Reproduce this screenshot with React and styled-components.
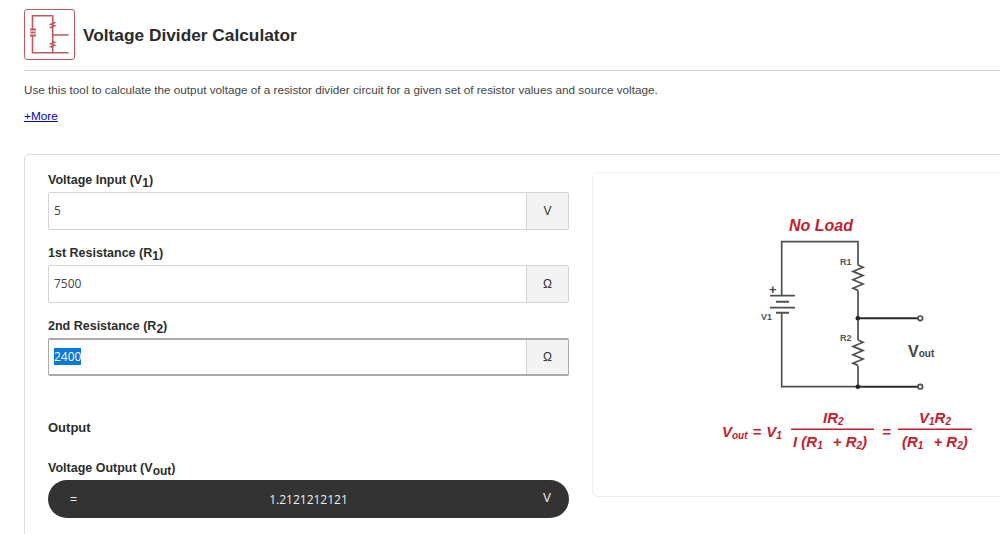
import { useEffect, useRef } from 'react'
import styled, { createGlobalStyle } from 'styled-components'

const GlobalStyle = createGlobalStyle`
    html, body {
        margin: 0;
        height: 100%;
        overflow: hidden;
        background: #fff;
    }
    body {
        font-family: "Liberation Sans", Arial, sans-serif;
        color: #333;
    }
`

const resistor = (x, y) => `M${x} ${y} l5 2.2 l-10 4.2 l10 4.2 l-10 4.2 l10 4.2 l-10 4.2 l5 2.2`

const ToolIcon = () => (
    <IconBox>
        <svg width="51" height="51" viewBox="24 9 51 51" fill="none" stroke="#bd5a5c" strokeWidth="1.6">
            <path d="M32.5 29V15.8H52.7V52.7H32.5V36" />
            <path d="M30 29.5h6M30.500 32.500h5M30 35.500h6" strokeWidth="1.8" />
            <path d="M52.7 35H68.5M52.7 52.7H68.5" />
            <path d="M52.7 22l2.2 .8-4.4 1.5 4.4 1.5-4.4 1.5 2.2 .8M52.7 41.5l2.2 .8-4.4 1.5 4.4 1.5-4.4 1.5 2.2 .8" strokeWidth="1.3" />
        </svg>
    </IconBox>
)

const CircuitDrawing = () => (
    <svg width="408" height="325" viewBox="592 172 408 325" fill="none">
        <Title x="789" y="231">No Load</Title>
        <g stroke="#505050" strokeWidth="1.7">
            <path d="M781.7 295V241.7H858V265" />
            <path d={resistor(858, 265)} />
            <path d="M858 290.5V340" />
            <path d={resistor(858, 340)} />
            <path d="M858 366V386.7" />
            <path d="M781.7 313V386.7H858" />
            <path d="M770 295.7H795M770 307.7H795" />
            <path d="M776 301.7H789M776 312.7H789" strokeWidth="1.9" />
            <path d="M858 318.3H918M858 386.7H918" strokeWidth="1.9" stroke="#2a2a2a" />
            <circle cx="920.3" cy="318.3" r="2.3" fill="#fff" />
            <circle cx="920.3" cy="386.7" r="2.3" fill="#fff" />
        </g>
        <circle cx="857.8" cy="318.3" r="2.3" fill="#222" />
        <circle cx="857.8" cy="386.7" r="2.3" fill="#222" />
        <PartLabel x="840" y="265">R1</PartLabel>
        <PartLabel x="840" y="341">R2</PartLabel>
        <PartLabel x="761" y="320">V1</PartLabel>
        <PlusSign x="769" y="294">+</PlusSign>
        <VoutLabel x="908" y="357">V<tspan fontSize="10">out</tspan></VoutLabel>

        <Formula x="722" y="437">V<tspan fontSize="10" dy="2">out</tspan><tspan dy="-2" dx="5">=</tspan><tspan dx="5">V</tspan><tspan fontSize="10" dy="2">1</tspan></Formula>
        <FractionBar x="791" y="428.5" width="83" height="1.5" />
        <Formula x="823" y="423">IR<tspan fontSize="10" dy="2">2</tspan></Formula>
        <Formula x="793" y="447">I (R<tspan fontSize="10" dy="2">1</tspan><tspan dy="-2" dx="10">+ R</tspan><tspan fontSize="10" dy="2">2</tspan><tspan dy="-2">)</tspan></Formula>
        <Formula x="882" y="437">=</Formula>
        <FractionBar x="898" y="428.5" width="74" height="1.5" />
        <Formula x="919" y="423">V<tspan fontSize="10" dy="2">1</tspan><tspan dy="-2">R</tspan><tspan fontSize="10" dy="2">2</tspan></Formula>
        <Formula x="902" y="447">(R<tspan fontSize="10" dy="2">1</tspan><tspan dy="-2" dx="10">+ R</tspan><tspan fontSize="10" dy="2">2</tspan><tspan dy="-2">)</tspan></Formula>
    </svg>
)

export default function App() {
    const selectedInput = useRef(null)

    useEffect(() => {
        selectedInput.current.focus()
        selectedInput.current.select()
    }, [])

    return (
        <Page>
            <GlobalStyle />
            <Header>
                <ToolIcon />
                <Heading>Voltage Divider Calculator</Heading>
            </Header>
            <Description>Use this tool to calculate the output voltage of a resistor divider circuit for a given set of resistor values and source voltage.</Description>
            <MoreLink href="#more">+More</MoreLink>
            <Card>
                <Form>
                    <Field>
                        <Label>Voltage Input (V<sub>1</sub>)</Label>
                        <InputGroup>
                            <Input defaultValue="5" />
                            <Unit>V</Unit>
                        </InputGroup>
                    </Field>
                    <Field>
                        <Label>1st Resistance (R<sub>1</sub>)</Label>
                        <InputGroup>
                            <Input defaultValue="7500" />
                            <Unit>Ω</Unit>
                        </InputGroup>
                    </Field>
                    <Field>
                        <Label>2nd Resistance (R<sub>2</sub>)</Label>
                        <InputGroup $focused>
                            <Input ref={selectedInput} defaultValue="2400" />
                            <Unit $focused>Ω</Unit>
                        </InputGroup>
                    </Field>
                    <OutputHeading>Output</OutputHeading>
                    <Field>
                        <Label>Voltage Output (V<sub>out</sub>)</Label>
                        <OutputPill>
                            <OutputSign>=</OutputSign>
                            <OutputValue>1.2121212121</OutputValue>
                            <OutputUnit>V</OutputUnit>
                        </OutputPill>
                    </Field>
                </Form>
                <DiagramPanel>
                    <CircuitDrawing />
                </DiagramPanel>
            </Card>
        </Page>
    )
}

const Page = styled.div`
    width: 1000px;
    height: 534px;
    overflow: hidden;
    padding-left: 24px;
    padding-top: 9px;
    box-sizing: border-box;
`
const Header = styled.div`
    display: flex;
    align-items: center;
    gap: 8px;
    height: 62px;
    box-sizing: border-box;
    padding-bottom: 10px;
    border-bottom: 1px solid #ccc;
`
const IconBox = styled.div`
    width: 51px;
    height: 51px;
    box-sizing: border-box;
    border: 1.5px solid #bd5a5c;
    border-radius: 3px;
    flex: none;
    svg {
        display: block;
        margin: -1.5px;
    }
`
const Heading = styled.h1`
    margin: 0;
    font-size: 17.3px;
    font-weight: 700;
    color: #2b2b2b;
    padding-top: 1px;
`
const Description = styled.p`
    margin: 11px 0 0;
    font-size: 11.72px;
    line-height: 16px;
    color: #444;
`
const MoreLink = styled.a`
    display: block;
    width: max-content;
    margin-top: 10px;
    font-size: 11.8px;
    line-height: 16px;
    color: #0000cc;
    text-decoration: underline;
`
const Card = styled.div`
    display: flex;
    gap: 23px;
    width: 1100px;
    height: 500px;
    margin-top: 30px;
    padding: 17px 0 0 23px;
    box-sizing: border-box;
    border: 1px solid #ddd;
    border-radius: 5px;
`
const Form = styled.div`
    display: flex;
    flex-direction: column;
    gap: 15px;
    width: 521px;
    flex: none;
`
const Field = styled.div`
    display: flex;
    flex-direction: column;
    gap: 4px;
`
const Label = styled.label`
    display: block;
    height: 16px;
    font-size: 12.5px;
    line-height: 16px;
    font-weight: 700;
    color: #2d2d2d;
    sub {
        font-size: 12px;
        line-height: 0;
        vertical-align: -3px;
    }
`
const InputGroup = styled.div`
    display: flex;
    height: 38px;
    box-sizing: border-box;
    border: 1px solid ${({ $focused }) => ($focused ? '#aaa' : '#d4d4d4')};
    border-width: ${({ $focused }) => ($focused ? '2px 1px' : '1px')};
    border-radius: 2px;
    background: #fff;
`
const Input = styled.input`
    flex: 1;
    min-width: 0;
    border: 0;
    outline: 0;
    padding: 0 5px 1px;
    background: transparent;
    font-family: "Open Sans", sans-serif;
    font-size: 12px;
    color: #444;
    &::selection {
        background: #0a78d7;
        color: #fff;
    }
`
const Unit = styled.div`
    display: flex;
    align-items: center;
    justify-content: center;
    width: 41px;
    flex: none;
    border-left: 1px solid #d4d4d4;
    background: #f3f3f3;
    font-size: 12px;
    color: #333;
`
const OutputHeading = styled.div`
    margin-top: 29px;
    margin-bottom: 9px;
    height: 16px;
    font-size: 13px;
    line-height: 16px;
    font-weight: 700;
    color: #2d2d2d;
`
const OutputPill = styled.div`
    display: grid;
    grid-template-columns: 50px 1fr 50px;
    align-items: center;
    height: 38px;
    border-radius: 19px;
    background: #333;
    color: #eee;
    font-size: 12px;
`
const OutputSign = styled.span`
    text-align: right;
    width: 29px;
`
const OutputValue = styled.div`
    text-align: center;
    font-family: "Open Sans", sans-serif;
    font-size: 12px;
`
const OutputUnit = styled.div`
    text-align: right;
    padding-right: 18px;
    padding-bottom: 2px;
`
const DiagramPanel = styled.div`
    width: 500px;
    height: 325px;
    box-sizing: border-box;
    border: 1px solid #eee;
    border-radius: 6px;
    svg {
        display: block;
        margin: -1px;
    }
`
const Title = styled.text`
    font-family: "Liberation Sans", Arial, sans-serif;
    font-size: 16px;
    font-weight: 700;
    font-style: italic;
    fill: #c4202e;
`
const PartLabel = styled.text`
    font-family: "Liberation Sans", Arial, sans-serif;
    font-size: 9px;
    font-weight: 700;
    fill: #555;
`
const PlusSign = styled(PartLabel)`
    font-size: 13px;
    fill: #444;
`
const VoutLabel = styled.text`
    font-family: "Liberation Sans", Arial, sans-serif;
    font-size: 16px;
    font-weight: 700;
    fill: #444;
`
const Formula = styled.text`
    font-family: "Liberation Sans", Arial, sans-serif;
    font-size: 15px;
    font-weight: 700;
    font-style: italic;
    fill: #c4202e;
`
const FractionBar = styled.rect`
    fill: #c4202e;
`
